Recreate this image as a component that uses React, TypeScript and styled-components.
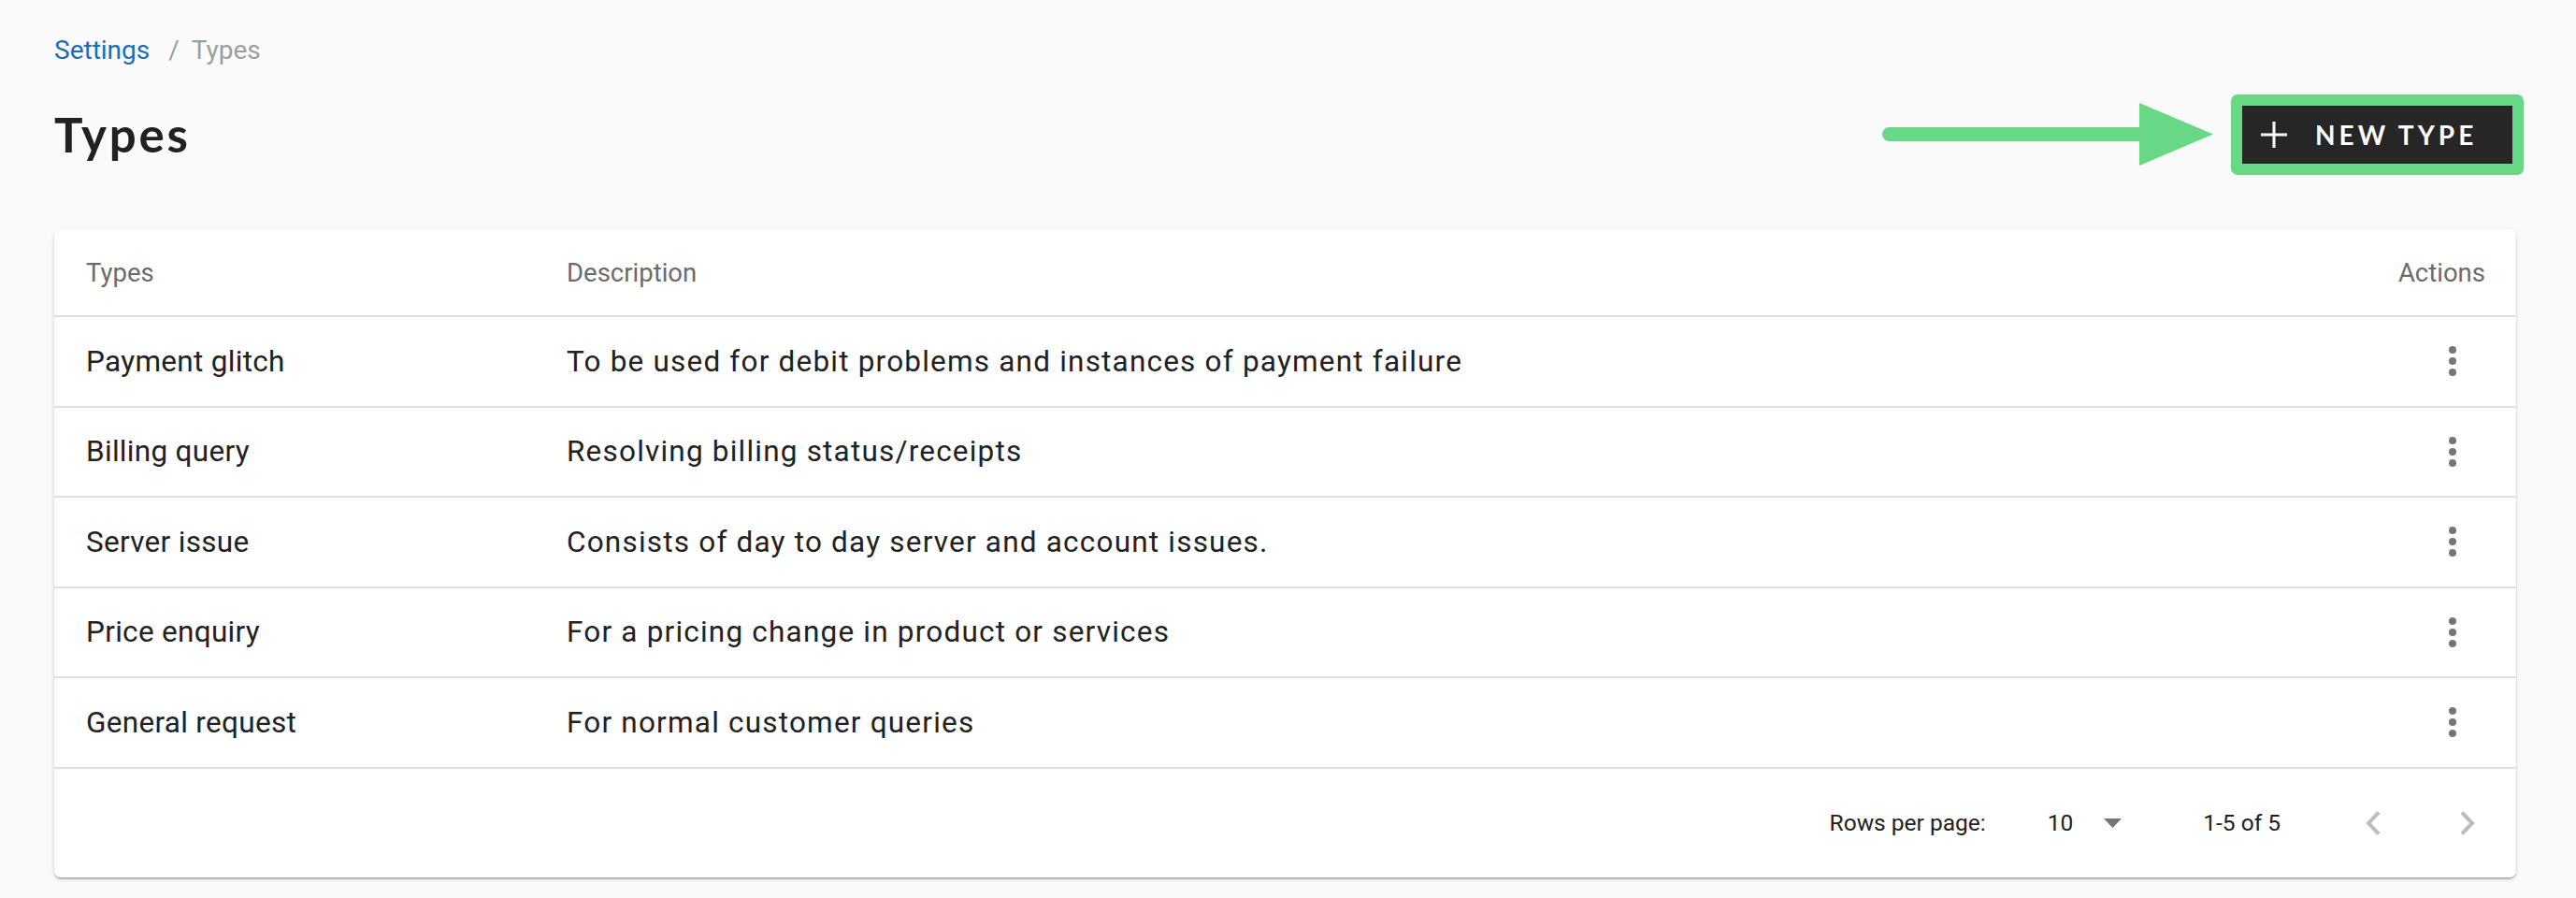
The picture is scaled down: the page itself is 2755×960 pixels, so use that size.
import * as React from 'react';
import styled, { createGlobalStyle } from 'styled-components';

const GlobalStyle = createGlobalStyle`
  html, body {
    margin: 0;
    padding: 0;
    background: #fafafa;
  }
  body {
    font-family: Roboto, 'Liberation Sans', Arial, sans-serif;
    color: #212121;
  }
`;

const Page = styled.div`
  padding: 33px 64px 0 58px;
  box-sizing: border-box;
  width: 2755px;
  min-height: 960px;
`;

const Breadcrumbs = styled.nav`
  display: flex;
  align-items: center;
  font-size: 28px;
  line-height: 42px;
`;

const Crumb = styled.span<{ active?: boolean }>`
  color: ${({ active }) => (active ? '#9e9e9e' : '#1a6db7')};
`;

const Separator = styled.span`
  color: #9e9e9e;
  margin: 0 13px 0 20px;
`;

const HeaderRow = styled.div`
  display: flex;
  align-items: center;
  justify-content: space-between;
  margin-top: 25px;
  margin-right: -8px;
  height: 87px;
`;

const Title = styled.h1`
  margin: 0;
  font-family: Lato, 'Liberation Sans', sans-serif;
  font-weight: 700;
  font-size: 51px;
  line-height: 60px;
  letter-spacing: 2.8px;
  color: #212121;
`;

const ActionGroup = styled.div`
  display: flex;
  align-items: center;
  gap: 19px;
`;

const Highlight = styled.div`
  border: 12px solid #69d886;
  border-radius: 7px;
  display: flex;
`;

const NewButton = styled.button`
  display: flex;
  align-items: center;
  width: 289px;
  height: 62px;
  box-sizing: border-box;
  padding: 0 0 0 20px;
  border: 0;
  background: #262626;
  color: #fff;
  font-family: Lato, 'Liberation Sans', sans-serif;
  font-weight: 700;
  font-size: 28px;
  letter-spacing: 4px;
  cursor: pointer;

  svg {
    margin-right: 30px;
    flex: none;
  }
`;

const Card = styled.div`
  margin-top: 58px;
  background: #fff;
  border-radius: 7px;
  box-shadow: 0 3px 2px -2px rgba(0, 0, 0, 0.2), 0 2px 2px 0 rgba(0, 0, 0, 0.14),
    0 2px 5px 0 rgba(0, 0, 0, 0.12);
  overflow: hidden;
`;

const Row = styled.div<{ head?: boolean }>`
  display: grid;
  grid-template-columns: 514px 1fr auto;
  align-items: center;
  padding: 0 33px 0 34px;
  height: ${({ head }) => (head ? '92px' : '94.5px')};
  border-bottom: 2px solid #e0e0e0;
  font-size: ${({ head }) => (head ? '27.5px' : '31.5px')};
  color: ${({ head }) => (head ? '#6b6b6b' : '#212121')};
  letter-spacing: ${({ head }) => (head ? '0' : '0.3px')};
`;

const Description = styled.div<{ head?: boolean }>`
  letter-spacing: ${({ head }) => (head ? '0' : '1.2px')};
`;

const RightCell = styled.div`
  justify-self: end;
  display: flex;
  align-items: center;
`;

const KebabButton = styled.button`
  width: 48px;
  height: 48px;
  margin-right: 11px;
  border: 0;
  padding: 0;
  background: transparent;
  display: flex;
  align-items: center;
  justify-content: center;
  cursor: pointer;
`;

const Footer = styled.div`
  display: flex;
  justify-content: flex-end;
  align-items: center;
  height: 116px;
  padding-right: 28px;
  font-size: 24.5px;
  color: #212121;
`;

const FooterText = styled.span<{ gap: number }>`
  margin-right: ${({ gap }) => gap}px;
`;

const SelectCaret = styled.svg`
  margin-right: 87px;
`;

const NavButton = styled.button`
  width: 48px;
  height: 48px;
  border: 0;
  padding: 0;
  background: transparent;
  display: flex;
  align-items: center;
  justify-content: center;
  & + & {
    margin-left: 53px;
  }
`;

const types = [
  { name: 'Payment glitch', description: 'To be used for debit problems and instances of payment failure' },
  { name: 'Billing query', description: 'Resolving billing status/receipts' },
  { name: 'Server issue', description: 'Consists of day to day server and account issues.' },
  { name: 'Price enquiry', description: 'For a pricing change in product or services' },
  { name: 'General request', description: 'For normal customer queries' },
];

const Arrow = () => (
  <svg width="354" height="67" viewBox="0 0 354 67">
    <path d="M7.5 26h275v15H7.5a7.5 7.5 0 0 1 0-15z" fill="#69d886" />
    <path d="M275 0 L354 33.5 L275 67 Z" fill="#69d886" />
  </svg>
);

const Kebab = () => (
  <svg width="10" height="34" viewBox="0 0 10 34">
    <circle cx="5" cy="5" r="4" fill="#757575" />
    <circle cx="5" cy="17" r="4" fill="#757575" />
    <circle cx="5" cy="29" r="4" fill="#757575" />
  </svg>
);

const Chevron = ({ dir }: { dir: 'left' | 'right' }) => (
  <svg width="16" height="26" viewBox="0 0 16 26">
    <polyline
      points={dir === 'left' ? '14,1.5 3,13 14,24.5' : '2,1.5 13,13 2,24.5'}
      fill="none"
      stroke="#bdbdbd"
      strokeWidth="4"
    />
  </svg>
);

export default function App() {
  return (
    <Page>
      <GlobalStyle />
      <Breadcrumbs>
        <Crumb>Settings</Crumb>
        <Separator>/</Separator>
        <Crumb active>Types</Crumb>
      </Breadcrumbs>

      <HeaderRow>
        <Title>Types</Title>
        <ActionGroup>
          <Arrow />
          <Highlight>
            <NewButton>
              <svg width="28" height="28" viewBox="0 0 28 28">
                <path d="M14 0v28M0 14h28" stroke="#fff" strokeWidth="3" />
              </svg>
              NEW TYPE
            </NewButton>
          </Highlight>
        </ActionGroup>
      </HeaderRow>

      <Card>
        <Row head>
          <div>Types</div>
          <Description head>Description</Description>
          <RightCell>Actions</RightCell>
        </Row>
        {types.map((t) => (
          <Row key={t.name}>
            <div>{t.name}</div>
            <Description>{t.description}</Description>
            <RightCell>
              <KebabButton aria-label="actions">
                <Kebab />
              </KebabButton>
            </RightCell>
          </Row>
        ))}
        <Footer>
          <FooterText gap={66}>Rows per page:</FooterText>
          <FooterText gap={33}>10</FooterText>
          <SelectCaret width="19" height="10" viewBox="0 0 19 10">
            <path d="M0 0h19L9.5 10z" fill="#757575" />
          </SelectCaret>
          <FooterText gap={75}>1-5 of 5</FooterText>
          <NavButton aria-label="previous page">
            <Chevron dir="left" />
          </NavButton>
          <NavButton aria-label="next page">
            <Chevron dir="right" />
          </NavButton>
        </Footer>
      </Card>
    </Page>
  );
}
